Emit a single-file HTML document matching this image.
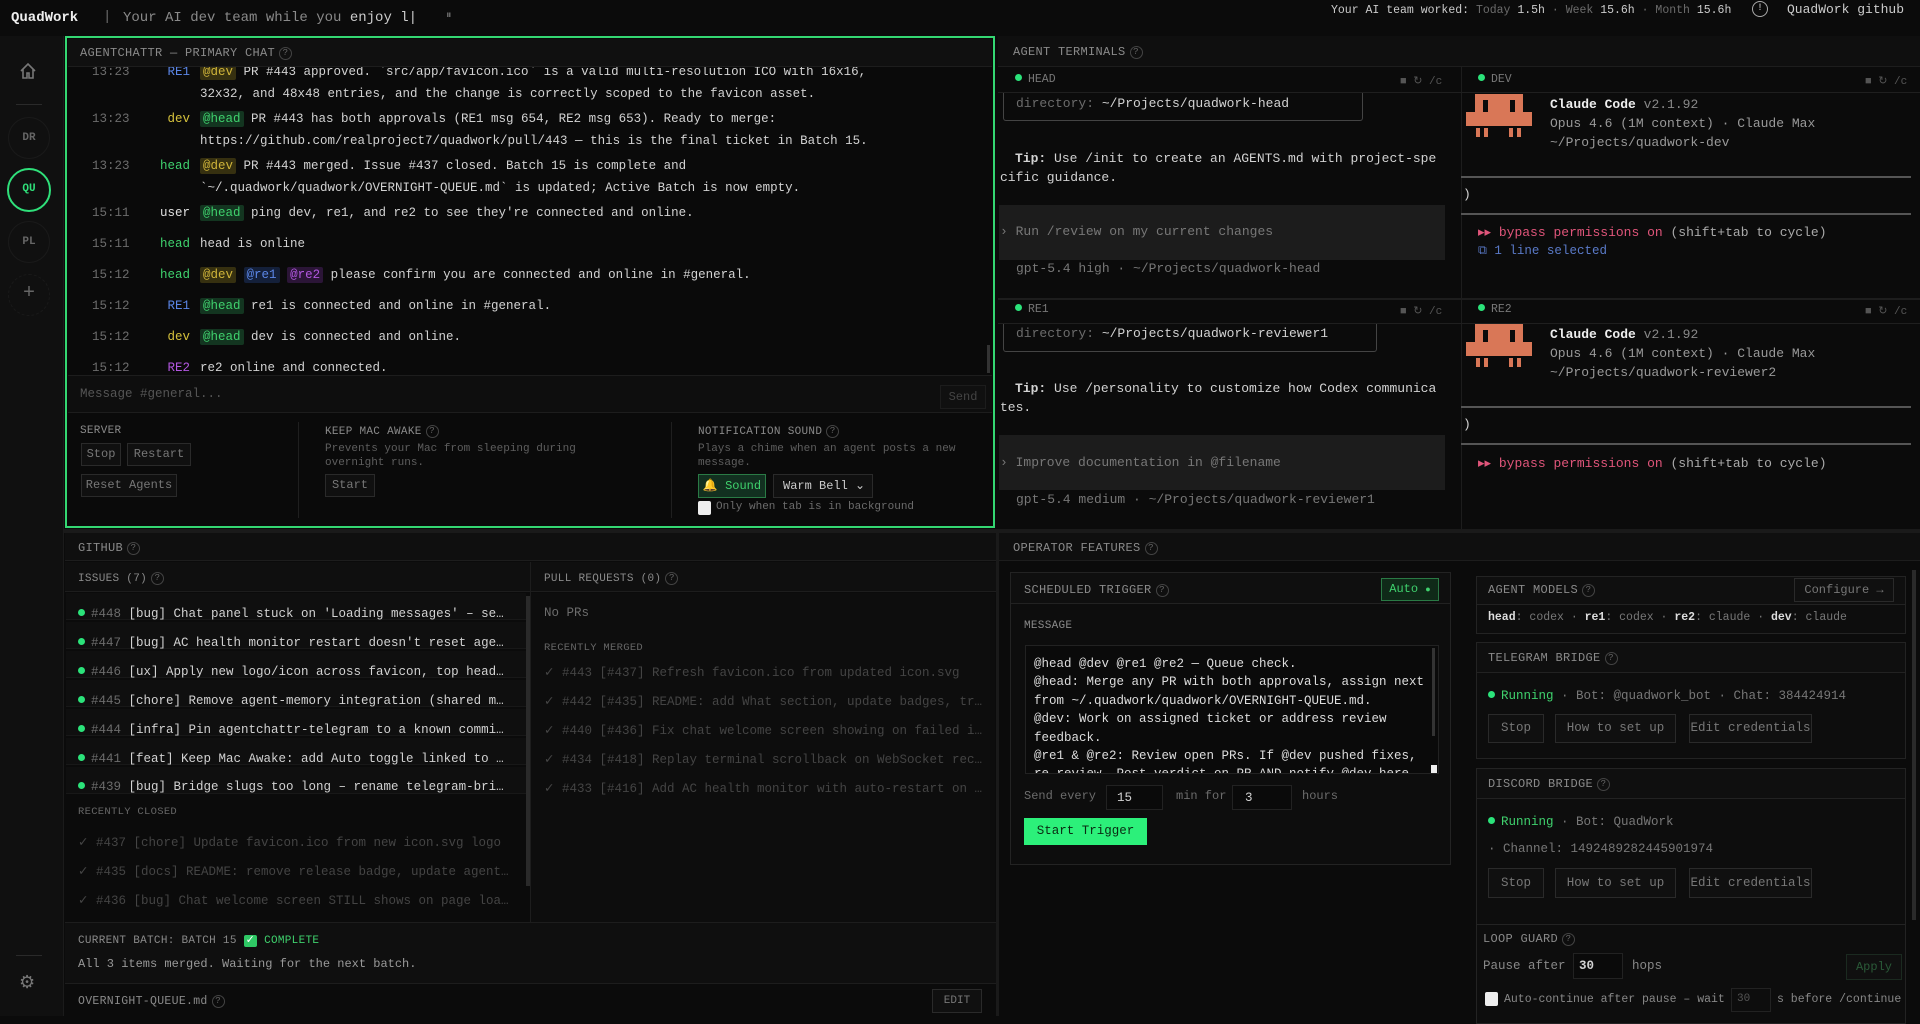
<!DOCTYPE html>
<html><head><meta charset="utf-8"><style>
*{margin:0;padding:0;box-sizing:border-box}
body{width:1920px;height:1016px;background:#0b0b0b;overflow:hidden;position:relative;font-family:"Liberation Mono",monospace;color:#d2d2d2;font-size:12.5px}
.a{position:absolute;white-space:nowrap}
.lbl{color:#8a8a8a;font-size:12px;letter-spacing:.3px}
.q{display:inline-block;width:13px;height:13px;border:1px solid #444;border-radius:50%;font-size:9px;line-height:11px;text-align:center;color:#666;margin-left:4px;vertical-align:1px}
.dim{color:#6c6c6c}
.btn{position:absolute;border:1px solid #2a2a2a;background:#101010;color:#777;font-size:12px;text-align:center}
.m{padding:1px 3px;border-radius:2px}
.mh{background:#133520;color:#3fd16d}.md{background:#363010;color:#cfb43a}.m1{background:#14203a;color:#5b86e6}.m2{background:#2b1537;color:#b257e0}
.box{position:absolute;border:1px solid #232323;background:#0d0d0d}
.dot{display:inline-block;width:7px;height:7px;border-radius:50%;background:#2be37a;margin-right:6px;vertical-align:1px}
.hr{position:absolute;height:1px;background:#1f1f1f}
.vr{position:absolute;width:1px;background:#1f1f1f}
.row{position:absolute;left:66px;width:460px;height:27px;background:#0f0f0f;border-bottom:1px solid #181818}
.tm{position:absolute;left:24px;color:#6c6c6c}
.nm{position:absolute;left:60px;width:62px;text-align:right}
.tx{position:absolute;left:132px;white-space:nowrap}
</style></head><body>
<!-- top bar -->
<div class="a" style="left:11px;top:10px;font-weight:bold;color:#eee;font-size:14px">QuadWork</div>
<div class="a dim" style="left:103px;top:9px;font-size:14px">|</div>
<div class="a" style="left:123px;top:10px;font-size:14px;color:#8a8a8a">Your AI dev team while you <span style="color:#ccc">enjoy l|</span></div>
<div class="a dim" style="left:446px;top:10px;font-size:11px">⏸</div>
<div class="a" style="left:1331px;top:4px;font-size:11.5px;color:#ccc">Your AI team worked: <span class="dim">Today</span> 1.5h <span class="dim">·</span> <span class="dim">Week</span> 15.6h <span class="dim">·</span> <span class="dim">Month</span> 15.6h</div>
<div class="a" style="left:1752px;top:1px;width:16px;height:16px;border:1.5px solid #aaa;border-radius:50%;font-size:10px;text-align:center;line-height:13px;color:#ccc">!</div>
<div class="a" style="left:1787px;top:2px;font-size:13px;color:#ccc">QuadWork github</div>

<!-- sidebar -->
<div class="a" style="left:0;top:36px;width:64px;height:980px;background:#101010;border-right:1px solid #1b1b1b"></div>
<svg class="a" style="left:19px;top:62px" width="18" height="18" viewBox="0 0 18 18" fill="none" stroke="#777" stroke-width="1.6"><path d="M2 9L9 2l7 7M4 7.5V16h4v-5h2v5h4V7.5"/></svg>
<div class="a" style="left:16px;top:104px;width:26px;height:1px;background:#2a2a2a"></div>
<div class="a" style="left:8px;top:117px;width:42px;height:42px;border:1px solid #1a1a1a;border-radius:50%;text-align:center;line-height:40px;font-size:11px;color:#666;font-weight:bold">DR</div>
<div class="a" style="left:7px;top:168px;width:44px;height:44px;border:2.5px solid #2fe07a;border-radius:50%;text-align:center;line-height:39px;font-size:11px;color:#2fe07a;font-weight:bold">QU</div>
<div class="a" style="left:8px;top:221px;width:42px;height:42px;border:1px solid #1a1a1a;border-radius:50%;text-align:center;line-height:40px;font-size:11px;color:#666;font-weight:bold">PL</div>
<div class="a" style="left:8px;top:274px;width:42px;height:42px;border:1px dashed #1a1a1a;border-radius:50%;text-align:center;line-height:38px;font-size:20px;color:#666">+</div>
<div class="a" style="left:16px;top:955px;width:26px;height:1px;background:#2a2a2a"></div>
<div class="a" style="left:19px;top:972px;font-size:18px;color:#777">⚙</div>

<!-- chat panel -->
<div class="a" style="left:65px;top:36px;width:930px;height:492px;border:2.5px solid #34d772;background:#0a0a0a"></div>
<div class="a" style="left:68px;top:39px;width:924px;height:28px;background:#101010;border-bottom:1px solid #1d1d1d"></div>
<div class="a lbl" style="left:80px;top:46px">AGENTCHATTR — PRIMARY CHAT<span class="q">?</span></div>
<div class="a" style="left:68px;top:67px;width:924px;height:308px;overflow:hidden">
<div class="a" style="left:0;top:-2px;width:900px;height:400px">
<div class="tm" style="top:0">13:23</div><div class="nm" style="top:0;color:#5b86e6">RE1</div><div class="tx" style="top:0"><span class="m md">@dev</span> PR #443 approved. `src/app/favicon.ico` is a valid multi-resolution ICO with 16x16,</div>
<div class="tx" style="top:22px">32x32, and 48x48 entries, and the change is correctly scoped to the favicon asset.</div>
<div class="tm" style="top:47px">13:23</div><div class="nm" style="top:47px;color:#d6c23c">dev</div><div class="tx" style="top:47px"><span class="m mh">@head</span> PR #443 has both approvals (RE1 msg 654, RE2 msg 653). Ready to merge:</div>
<div class="tx" style="top:69px">https://github.com/realproject7/quadwork/pull/443 — this is the final ticket in Batch 15.</div>
<div class="tm" style="top:94px">13:23</div><div class="nm" style="top:94px;color:#3fd16d">head</div><div class="tx" style="top:94px"><span class="m md">@dev</span> PR #443 merged. Issue #437 closed. Batch 15 is complete and</div>
<div class="tx" style="top:116px">`~/.quadwork/quadwork/OVERNIGHT-QUEUE.md` is updated; Active Batch is now empty.</div>
<div class="tm" style="top:141px">15:11</div><div class="nm" style="top:141px;color:#e0e0e0">user</div><div class="tx" style="top:141px"><span class="m mh">@head</span> ping dev, re1, and re2 to see they're connected and online.</div>
<div class="tm" style="top:172px">15:11</div><div class="nm" style="top:172px;color:#3fd16d">head</div><div class="tx" style="top:172px">head is online</div>
<div class="tm" style="top:203px">15:12</div><div class="nm" style="top:203px;color:#3fd16d">head</div><div class="tx" style="top:203px"><span class="m md">@dev</span> <span class="m m1">@re1</span> <span class="m m2">@re2</span> please confirm you are connected and online in #general.</div>
<div class="tm" style="top:234px">15:12</div><div class="nm" style="top:234px;color:#5b86e6">RE1</div><div class="tx" style="top:234px"><span class="m mh">@head</span> re1 is connected and online in #general.</div>
<div class="tm" style="top:265px">15:12</div><div class="nm" style="top:265px;color:#d6c23c">dev</div><div class="tx" style="top:265px"><span class="m mh">@head</span> dev is connected and online.</div>
<div class="tm" style="top:296px">15:12</div><div class="nm" style="top:296px;color:#b257e0">RE2</div><div class="tx" style="top:296px">re2 online and connected.</div>
</div>
<div class="a" style="left:919px;top:278px;width:3px;height:28px;background:#333"></div>
</div>
<div class="a" style="left:68px;top:375px;width:924px;height:38px;background:#0e0e0e;border-top:1px solid #1d1d1d;border-bottom:1px solid #1d1d1d"></div>
<div class="a dim" style="left:80px;top:387px;color:#555">Message #general...</div>
<div class="btn" style="left:940px;top:385px;width:46px;height:24px;line-height:22px;color:#444;border-color:#1c1c1c">Send</div>
<div class="a lbl" style="left:80px;top:425px;font-size:11px">SERVER</div>
<div class="btn" style="left:81px;top:443px;width:40px;height:23px;line-height:21px">Stop</div>
<div class="btn" style="left:127px;top:443px;width:64px;height:23px;line-height:21px">Restart</div>
<div class="btn" style="left:81px;top:474px;width:96px;height:23px;line-height:21px">Reset Agents</div>
<div class="vr" style="left:298px;top:422px;height:96px"></div>
<div class="a lbl" style="left:325px;top:425px;font-size:11px">KEEP MAC AWAKE<span class="q">?</span></div>
<div class="a dim" style="left:325px;top:442px;font-size:11px;line-height:14px;color:#5e5e5e">Prevents your Mac from sleeping during<br>overnight runs.</div>
<div class="btn" style="left:325px;top:474px;width:50px;height:23px;line-height:21px">Start</div>
<div class="vr" style="left:671px;top:422px;height:96px"></div>
<div class="a lbl" style="left:698px;top:425px;font-size:11px">NOTIFICATION SOUND<span class="q">?</span></div>
<div class="a dim" style="left:698px;top:442px;font-size:11px;line-height:14px;color:#5e5e5e">Plays a chime when an agent posts a new<br>message.</div>
<div class="btn" style="left:698px;top:474px;width:68px;height:24px;line-height:22px;background:#123020;border-color:#2a7a45;color:#3fd16d">🔔 Sound</div>
<div class="btn" style="left:773px;top:474px;width:100px;height:24px;line-height:22px;color:#ccc;text-align:left;padding-left:9px">Warm Bell  ⌄</div>
<div class="a" style="left:698px;top:501px;width:13px;height:14px;background:#eee;border-radius:2px"></div>
<div class="a dim" style="left:716px;top:501px;font-size:11px">Only when tab is in background</div>

<!-- agent terminals -->
<div class="a" style="left:998px;top:36px;width:922px;height:31px;background:#0f0f0f;border-bottom:1px solid #1d1d1d"></div>
<div class="a lbl" style="left:1013px;top:45px">AGENT TERMINALS<span class="q">?</span></div>
<div class="vr" style="left:1461px;top:67px;height:462px;background:#1d1d1d"></div>
<div class="hr" style="left:998px;top:298px;width:922px;background:#1d1d1d;height:2px"></div>
<div class="hr" style="left:998px;top:92px;width:922px"></div>
<div class="hr" style="left:998px;top:323px;width:922px"></div>
<div class="a" style="left:1015px;top:73px;font-size:11.5px;color:#777"><span class="dot"></span>HEAD</div>
<div class="a" style="left:1400px;top:74px;font-size:11px;color:#555">■ ↻ /c</div>
<div class="a" style="left:1478px;top:73px;font-size:11.5px;color:#777"><span class="dot"></span>DEV</div>
<div class="a" style="left:1865px;top:74px;font-size:11px;color:#555">■ ↻ /c</div>
<div class="a" style="left:1015px;top:303px;font-size:11.5px;color:#777"><span class="dot"></span>RE1</div>
<div class="a" style="left:1400px;top:304px;font-size:11px;color:#555">■ ↻ /c</div>
<div class="a" style="left:1478px;top:303px;font-size:11.5px;color:#777"><span class="dot"></span>RE2</div>
<div class="a" style="left:1865px;top:304px;font-size:11px;color:#555">■ ↻ /c</div>
<!-- head term -->
<div class="a" style="left:1003px;top:93px;width:360px;height:28px;border:1px solid #444;border-top:none;border-radius:0 0 3px 3px"></div>
<div class="a" style="left:1016px;top:96px;font-size:13px"><span class="dim">directory:</span> ~/Projects/quadwork-head</div>
<div class="a" style="left:1015px;top:151px;font-size:13px"><b>Tip:</b> Use /init to create an AGENTS.md with project-spe</div>
<div class="a" style="left:1000px;top:170px;font-size:13px">cific guidance.</div>
<div class="a" style="left:999px;top:205px;width:446px;height:55px;background:#1c1c1c"></div>
<div class="a" style="left:1000px;top:224px;font-size:13px;color:#777">› Run /review on my current changes</div>
<div class="a" style="left:1016px;top:261px;font-size:13px;color:#777">gpt-5.4 high · ~/Projects/quadwork-head</div>
<!-- re1 term -->
<div class="a" style="left:1003px;top:324px;width:374px;height:28px;border:1px solid #444;border-top:none;border-radius:0 0 3px 3px"></div>
<div class="a" style="left:1016px;top:326px;font-size:13px"><span class="dim">directory:</span> ~/Projects/quadwork-reviewer1</div>
<div class="a" style="left:1015px;top:381px;font-size:13px"><b>Tip:</b> Use /personality to customize how Codex communica</div>
<div class="a" style="left:1000px;top:400px;font-size:13px">tes.</div>
<div class="a" style="left:999px;top:435px;width:446px;height:55px;background:#1c1c1c"></div>
<div class="a" style="left:1000px;top:455px;font-size:13px;color:#777">› Improve documentation in @filename</div>
<div class="a" style="left:1016px;top:492px;font-size:13px;color:#777">gpt-5.4 medium · ~/Projects/quadwork-reviewer1</div>
<!-- claude logos -->
<svg class="a" style="left:1466px;top:94px" width="66" height="46" viewBox="0 0 66 46" fill="#d97757"><path d="M9 0h48v18H9zM0 18h66v14H0zM10 34h4v9h-4zM18 34h4v9h-4zM43 34h4v9h-4zM51 34h4v9h-4z"/><path fill="#0b0b0b" d="M17 6h5v12h-5zM44 6h5v12h-5z"/></svg>
<svg class="a" style="left:1466px;top:324px" width="66" height="46" viewBox="0 0 66 46" fill="#d97757"><path d="M9 0h48v18H9zM0 18h66v14H0zM10 34h4v9h-4zM18 34h4v9h-4zM43 34h4v9h-4zM51 34h4v9h-4z"/><path fill="#0b0b0b" d="M17 6h5v12h-5zM44 6h5v12h-5z"/></svg>
<div class="a" style="left:1550px;top:95px;font-size:13px;line-height:19px"><b style="color:#eee">Claude Code</b> <span style="color:#888">v2.1.92</span><br><span style="color:#999">Opus 4.6 (1M context) · Claude Max</span><br><span style="color:#999">~/Projects/quadwork-dev</span></div>
<div class="a" style="left:1461px;top:176px;width:450px;height:2px;background:#555"></div>
<div class="a" style="left:1463px;top:187px;font-size:13px">)</div>
<div class="a" style="left:1461px;top:213px;width:450px;height:2px;background:#555"></div>
<div class="a" style="left:1478px;top:225px;font-size:13px;color:#aaa"><span style="color:#e0557a">▸▸ bypass permissions on</span> (shift+tab to cycle)</div>
<div class="a" style="left:1478px;top:244px;font-size:12.5px;color:#5a7ac8">⧉ 1 line selected</div>
<div class="a" style="left:1550px;top:325px;font-size:13px;line-height:19px"><b style="color:#eee">Claude Code</b> <span style="color:#888">v2.1.92</span><br><span style="color:#999">Opus 4.6 (1M context) · Claude Max</span><br><span style="color:#999">~/Projects/quadwork-reviewer2</span></div>
<div class="a" style="left:1461px;top:406px;width:450px;height:2px;background:#555"></div>
<div class="a" style="left:1463px;top:417px;font-size:13px">)</div>
<div class="a" style="left:1461px;top:443px;width:450px;height:2px;background:#555"></div>
<div class="a" style="left:1478px;top:456px;font-size:13px;color:#aaa"><span style="color:#e0557a">▸▸ bypass permissions on</span> (shift+tab to cycle)</div>

<!-- bottom split bar -->
<div class="a" style="left:64px;top:529px;width:1856px;height:4px;background:#1a1a1a"></div>
<div class="vr" style="left:996px;top:529px;height:487px;width:3px;background:#1a1a1a"></div>

<!-- github -->
<div class="a" style="left:65px;top:533px;width:931px;height:28px;background:#0f0f0f;border-bottom:1px solid #1d1d1d"></div>
<div class="a lbl" style="left:78px;top:541px">GITHUB<span class="q">?</span></div>
<div class="a" style="left:65px;top:562px;width:931px;height:30px;background:#0f0f0f;border-bottom:1px solid #1d1d1d"></div>
<div class="vr" style="left:530px;top:562px;height:360px;background:#1d1d1d"></div>
<div class="a lbl" style="left:78px;top:572px;font-size:11px">ISSUES (7)<span class="q">?</span></div>
<div class="a lbl" style="left:544px;top:572px;font-size:11px">PULL REQUESTS (0)<span class="q">?</span></div>
<div class="row" style="top:593px"></div><div class="row" style="top:622px"></div><div class="row" style="top:651px"></div><div class="row" style="top:680px"></div><div class="row" style="top:709px"></div><div class="row" style="top:738px"></div><div class="row" style="top:767px"></div>
<div class="a" style="left:78px;top:600px;line-height:28.9px;font-size:12.5px"><span class="dot"></span><span class="dim">#448</span>  [bug] Chat panel stuck on 'Loading messages' – se…<br><span class="dot"></span><span class="dim">#447</span>  [bug] AC health monitor restart doesn't reset age…<br><span class="dot"></span><span class="dim">#446</span>  [ux] Apply new logo/icon across favicon, top head…<br><span class="dot"></span><span class="dim">#445</span>  [chore] Remove agent-memory integration (shared m…<br><span class="dot"></span><span class="dim">#444</span>  [infra] Pin agentchattr-telegram to a known commi…<br><span class="dot"></span><span class="dim">#441</span>  [feat] Keep Mac Awake: add Auto toggle linked to …<br><span class="dot"></span><span class="dim">#439</span>  [bug] Bridge slugs too long – rename telegram-bri…</div>
<div class="a lbl" style="left:78px;top:806px;font-size:10.5px;color:#666">RECENTLY CLOSED</div>
<div class="a" style="left:78px;top:829px;line-height:28.9px;font-size:12.5px;color:#444">✓ #437  [chore] Update favicon.ico from new icon.svg logo<br>✓ #435  [docs] README: remove release badge, update agent…<br>✓ #436  [bug] Chat welcome screen STILL shows on page loa…<br>✓ #438  [bug] bridges/ directory not included in npm pack</div>
<div class="a" style="left:526px;top:596px;width:4px;height:290px;background:#2a2a2a"></div>
<div class="a" style="left:531px;top:593px;width:464px;height:329px;background:#0d0d0d"></div>
<div class="a dim" style="left:544px;top:606px">No PRs</div>
<div class="a lbl" style="left:544px;top:642px;font-size:10.5px;color:#666">RECENTLY MERGED</div>
<div class="a" style="left:544px;top:659px;line-height:28.9px;font-size:12.5px;color:#444">✓ #443  [#437] Refresh favicon.ico from updated icon.svg<br>✓ #442  [#435] README: add What section, update badges, tr…<br>✓ #440  [#436] Fix chat welcome screen showing on failed i…<br>✓ #434  [#418] Replay terminal scrollback on WebSocket rec…<br>✓ #433  [#416] Add AC health monitor with auto-restart on …</div>
<div class="a" style="left:65px;top:922px;width:931px;height:62px;background:#0f0f0f;border-top:1px solid #1d1d1d;border-bottom:1px solid #1d1d1d"></div>
<div class="a lbl" style="left:78px;top:933px;font-size:11px">CURRENT BATCH: BATCH 15 <span style="background:#2fc865;color:#fff;padding:0 2px;border-radius:2px">✓</span> <span style="color:#3fd16d">COMPLETE</span></div>
<div class="a" style="left:78px;top:957px;font-size:12px;color:#999">All 3 items merged. Waiting for the next batch.</div>
<div class="a lbl" style="left:78px;top:995px;font-size:11.5px">OVERNIGHT-QUEUE.md<span class="q">?</span></div>
<div class="btn" style="left:932px;top:989px;width:50px;height:24px;line-height:22px;font-size:11px">EDIT</div>

<!-- operator features -->
<div class="a" style="left:999px;top:533px;width:921px;height:28px;background:#0f0f0f;border-bottom:1px solid #1d1d1d"></div>
<div class="a lbl" style="left:1013px;top:541px">OPERATOR FEATURES<span class="q">?</span></div>
<div class="box" style="left:1010px;top:572px;width:441px;height:293px"></div>
<div class="a" style="left:1011px;top:573px;width:439px;height:31px;background:#0f0f0f;border-bottom:1px solid #222"></div>
<div class="a lbl" style="left:1024px;top:583px">SCHEDULED TRIGGER<span class="q">?</span></div>
<div class="btn" style="left:1381px;top:578px;width:58px;height:23px;line-height:21px;background:#0f2a18;border-color:#2a7a45;color:#3fd16d">Auto <span style="font-size:9px">●</span></div>
<div class="a lbl" style="left:1024px;top:620px;font-size:11px">MESSAGE</div>
<div class="a" style="left:1025px;top:645px;width:414px;height:129px;border:1px solid #222;background:#0a0a0a;overflow:hidden">
<div class="a" style="left:8px;top:9px;font-size:12.5px;line-height:18.4px;color:#ddd">@head @dev @re1 @re2 — Queue check.<br>@head: Merge any PR with both approvals, assign next<br>from ~/.quadwork/quadwork/OVERNIGHT-QUEUE.md.<br>@dev: Work on assigned ticket or address review<br>feedback.<br>@re1 &amp; @re2: Review open PRs. If @dev pushed fixes,<br>re-review. Post verdict on PR AND notify @dev here.</div>
<div class="a" style="left:406px;top:2px;width:3px;height:88px;background:#333"></div>
<div class="a" style="left:405px;top:119px;width:6px;height:8px;background:#eee"></div>
</div>
<div class="a dim" style="left:1024px;top:789px;font-size:12px">Send every</div>
<div class="a" style="left:1106px;top:785px;width:57px;height:25px;border:1px solid #222;background:#0a0a0a;padding:5px 10px">15</div>
<div class="a dim" style="left:1176px;top:789px;font-size:12px">min for</div>
<div class="a" style="left:1232px;top:785px;width:60px;height:25px;border:1px solid #222;background:#0a0a0a;padding:5px 12px">3</div>
<div class="a dim" style="left:1302px;top:789px;font-size:12px">hours</div>
<div class="a" style="left:1024px;top:818px;width:123px;height:27px;background:#2cf07a;font-size:12.5px;line-height:27px;text-align:center;color:#0a2a12">Start Trigger</div>

<div class="box" style="left:1476px;top:576px;width:430px;height:58px"></div>
<div class="a" style="left:1477px;top:577px;width:428px;height:28px;background:#0f0f0f;border-bottom:1px solid #222"></div>
<div class="a lbl" style="left:1488px;top:583px">AGENT MODELS<span class="q">?</span></div>
<div class="btn" style="left:1794px;top:578px;width:100px;height:24px;line-height:22px">Configure →</div>
<div class="a" style="left:1488px;top:611px;font-size:11.5px;color:#777"><b style="color:#ddd">head</b>: codex · <b style="color:#ddd">re1</b>: codex · <b style="color:#ddd">re2</b>: claude · <b style="color:#ddd">dev</b>: claude</div>

<div class="box" style="left:1476px;top:642px;width:430px;height:117px"></div>
<div class="a" style="left:1477px;top:643px;width:428px;height:30px;background:#0f0f0f;border-bottom:1px solid #222"></div>
<div class="a lbl" style="left:1488px;top:651px">TELEGRAM BRIDGE<span class="q">?</span></div>
<div class="a" style="left:1488px;top:689px;color:#777"><span class="dot"></span><span style="color:#3fd16d">Running</span> · Bot: @quadwork_bot · Chat: 384424914</div>
<div class="btn" style="left:1488px;top:714px;width:56px;height:29px;line-height:27px;font-size:12.5px">Stop</div>
<div class="btn" style="left:1555px;top:714px;width:121px;height:29px;line-height:27px;font-size:12.5px">How to set up</div>
<div class="btn" style="left:1689px;top:714px;width:123px;height:29px;line-height:27px;font-size:12.5px">Edit credentials</div>

<div class="box" style="left:1476px;top:768px;width:430px;height:163px"></div>
<div class="a" style="left:1477px;top:769px;width:428px;height:30px;background:#0f0f0f;border-bottom:1px solid #222"></div>
<div class="a lbl" style="left:1488px;top:777px">DISCORD BRIDGE<span class="q">?</span></div>
<div class="a" style="left:1488px;top:815px;color:#777"><span class="dot"></span><span style="color:#3fd16d">Running</span> · Bot: QuadWork</div>
<div class="a" style="left:1488px;top:842px;color:#777">· Channel: 1492489282445901974</div>
<div class="btn" style="left:1488px;top:868px;width:56px;height:30px;line-height:28px;font-size:12.5px">Stop</div>
<div class="btn" style="left:1555px;top:868px;width:121px;height:30px;line-height:28px;font-size:12.5px">How to set up</div>
<div class="btn" style="left:1689px;top:868px;width:123px;height:30px;line-height:28px;font-size:12.5px">Edit credentials</div>

<div class="box" style="left:1476px;top:924px;width:430px;height:100px"></div>
<div class="a lbl" style="left:1483px;top:932px">LOOP GUARD<span class="q">?</span></div>
<div class="a dim" style="left:1483px;top:959px;color:#888">Pause after</div>
<div class="a" style="left:1573px;top:953px;width:50px;height:26px;border:1px solid #222;background:#0a0a0a;padding:5px 5px;font-weight:bold">30</div>
<div class="a dim" style="left:1632px;top:959px;color:#888">hops</div>
<div class="btn" style="left:1846px;top:954px;width:56px;height:26px;line-height:24px;color:#2a5a38;border-color:#1b2a20">Apply</div>
<div class="a" style="left:1485px;top:992px;width:13px;height:14px;background:#eee;border-radius:2px"></div>
<div class="a dim" style="left:1504px;top:993px;font-size:11.5px;color:#888">Auto-continue after pause – wait</div>
<div class="a" style="left:1731px;top:988px;width:40px;height:24px;border:1px solid #222;padding:4px 5px;font-size:11px;color:#555">30</div>
<div class="a dim" style="left:1777px;top:993px;font-size:11.5px;color:#888">s before /continue</div>
<div class="a" style="left:1912px;top:570px;width:4px;height:350px;background:#2a2a2a"></div>
</body></html>
